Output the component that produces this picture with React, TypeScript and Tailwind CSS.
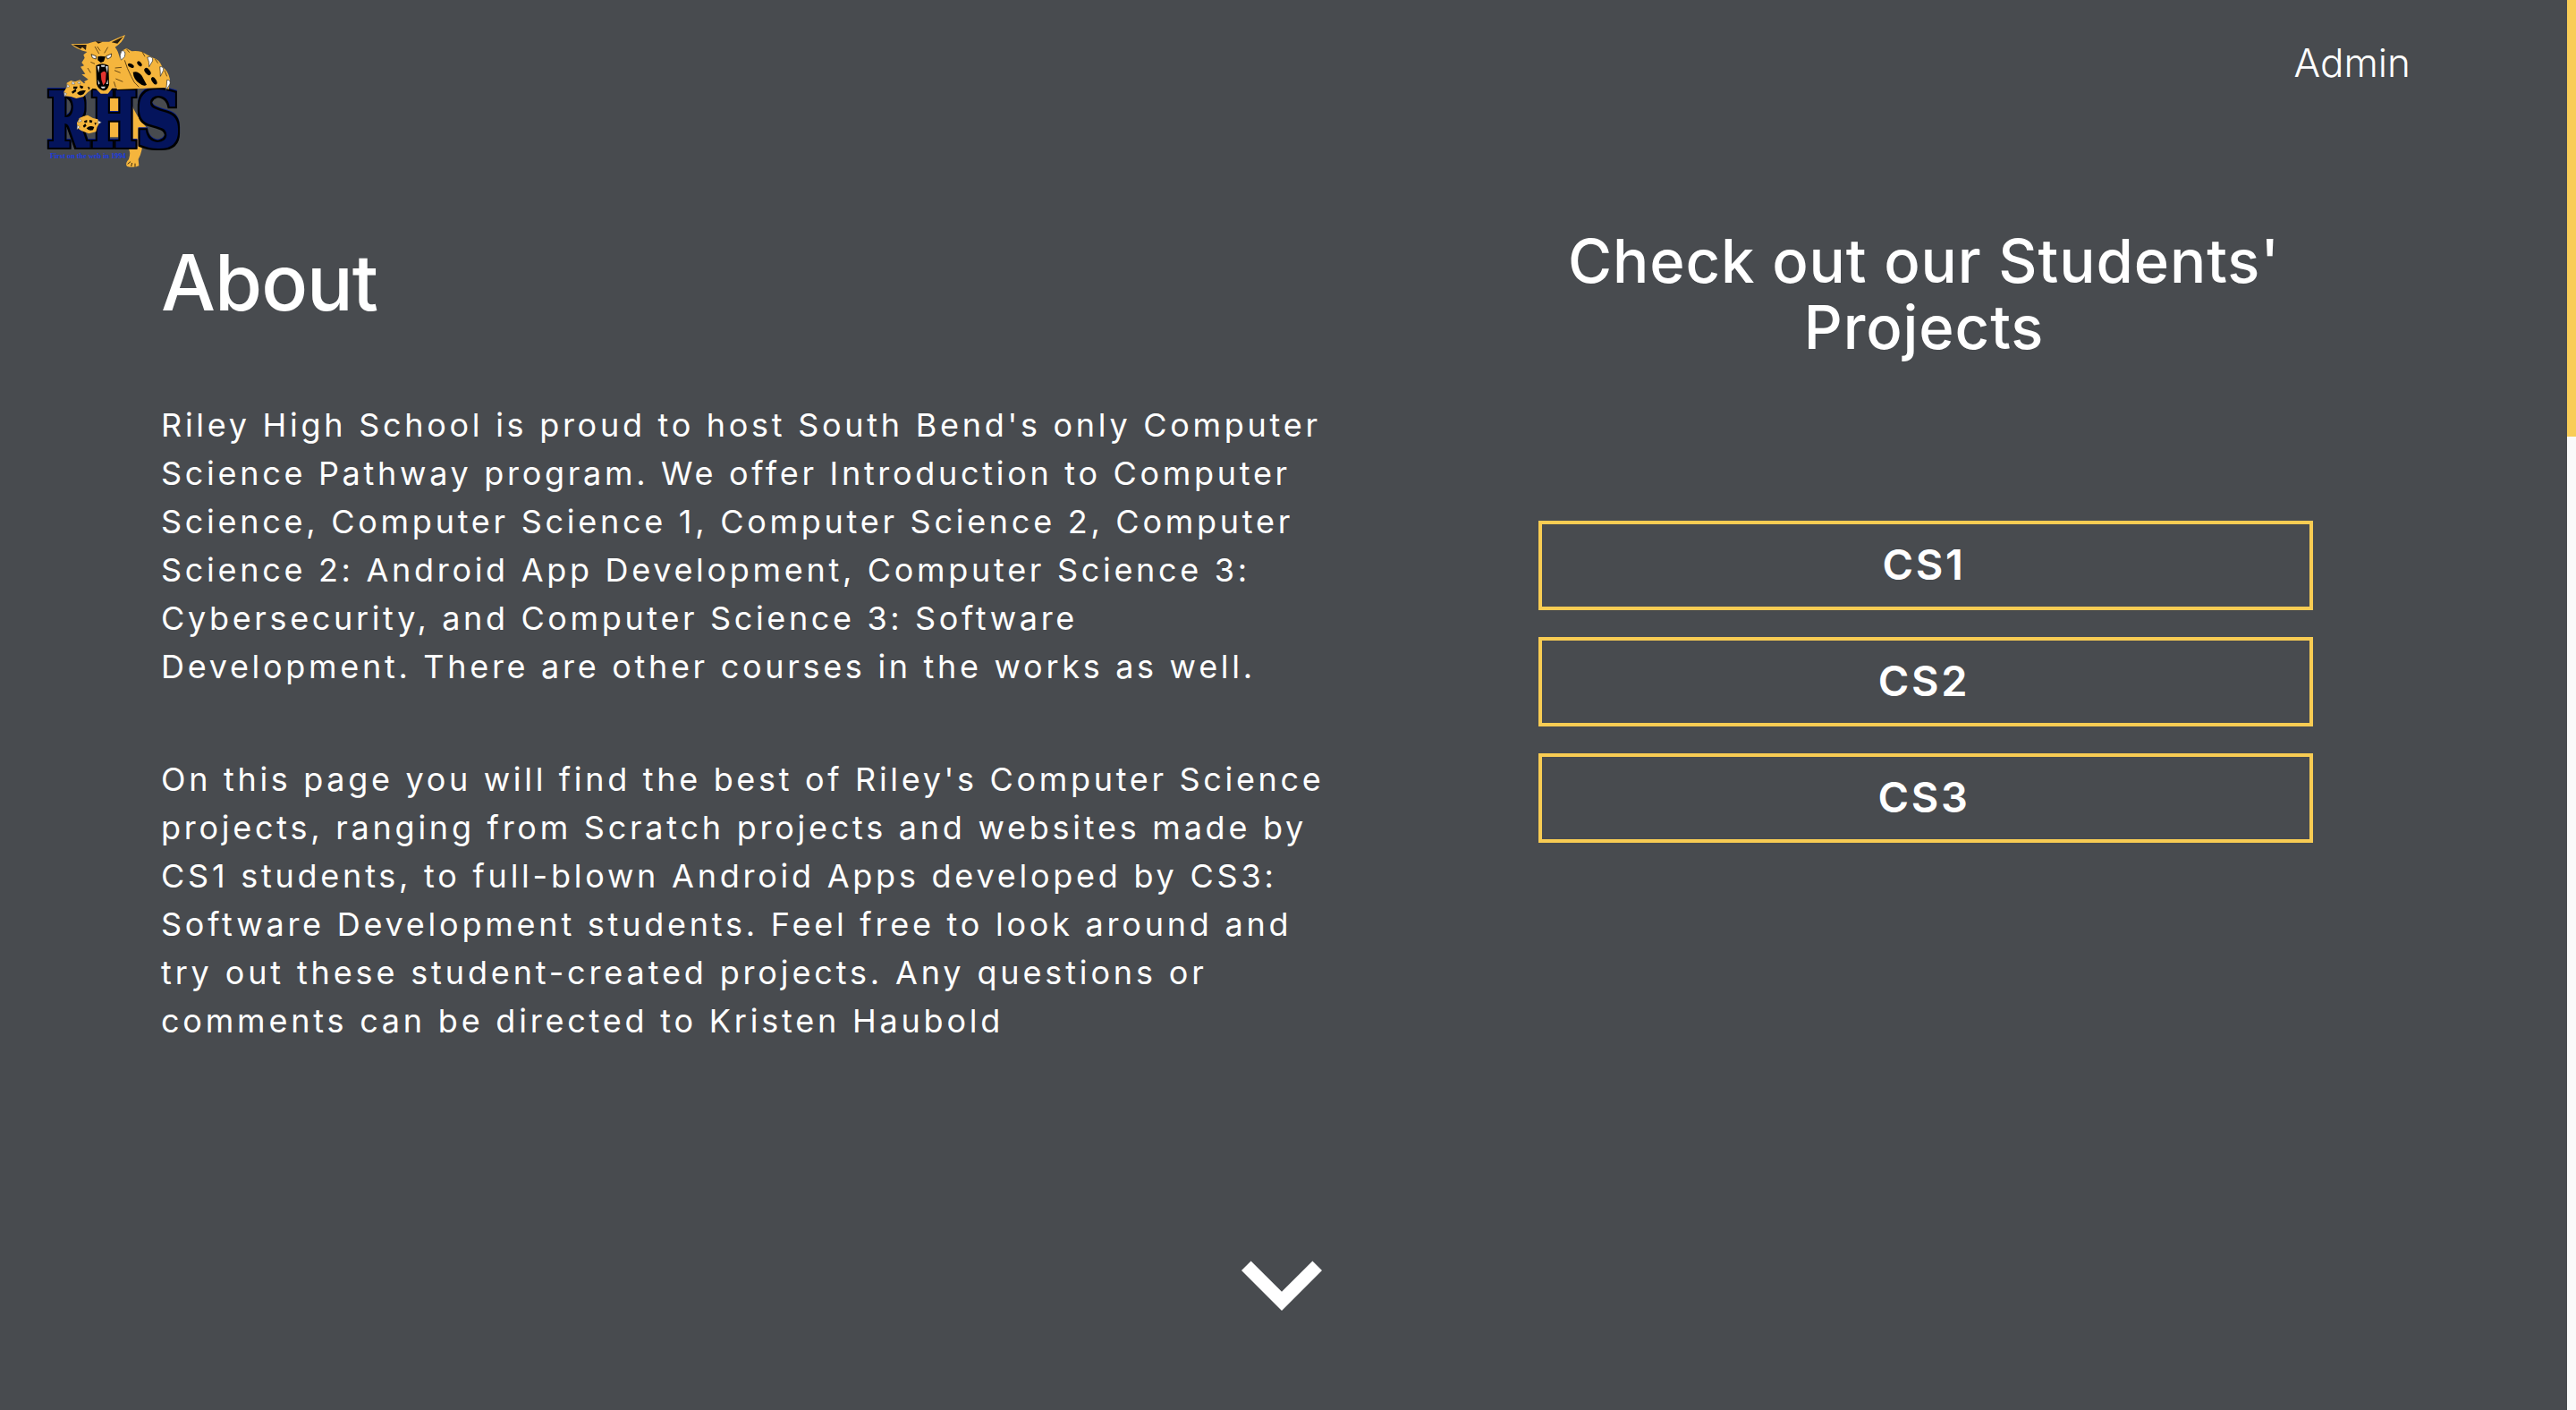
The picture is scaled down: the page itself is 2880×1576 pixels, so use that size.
import React from "react";

const LETTERS = [
  { char: "R", x: 70, width: 138 },
  { char: "H", x: 217, width: 152 },
  { char: "S", x: 367, width: 150 },
];

function Logo() {
  return (
    <svg viewBox="0 0 570 570" className="size-[190px]" role="img" aria-label="RHS Wildcats">
      <defs>
        <filter id="varsity" x="-15%" y="-15%" width="130%" height="130%" colorInterpolationFilters="sRGB">
          <feMorphology in="SourceAlpha" operator="dilate" radius="9" result="outer" />
          <feOffset in="outer" dx="1" dy="-3" result="shifted" />
          <feFlood floodColor="#08208f" />
          <feComposite in2="shifted" operator="in" result="bevel" />
          <feMorphology in="SourceAlpha" operator="dilate" radius="9" result="outline" />
          <feMorphology in="SourceGraphic" operator="dilate" radius="3" result="face" />
          <feMerge>
            <feMergeNode in="bevel" />
            <feMergeNode in="outline" />
            <feMergeNode in="face" />
          </feMerge>
        </filter>
      </defs>

      {/* body and hind leg behind the letters */}
      <path d="M276 240 L310 240 L310 400 L278 400 Z" className="fill-[#f5b53d]" />
      <path d="M352 290 Q362 322 402 368 L384 384 L386 440 Q382 460 374 474 L376 496 Q358 504 336 498 Q328 488 342 474 Q350 448 340 438 L344 380 Z" className="fill-[#f5b53d]" />
      <path d="M338 490 l10 -8 M350 498 l3 -12 M363 500 l0 -12" className="fill-none stroke-[#3a2b12]" strokeWidth="3" />

      {LETTERS.map((l) => (
        <text
          key={l.char}
          x={l.x}
          y={432}
          textLength={l.width}
          lengthAdjust="spacingAndGlyphs"
          filter="url(#varsity)"
          className="fill-[#04145c] font-['DejaVu_Serif'] text-[250px] font-bold"
        >
          {l.char}
        </text>
      ))}

      {/* raised arm and paw */}
      <path d="M302 240 Q304 150 316 112 L334 102 L352 112 Q382 108 404 124 L424 134 Q444 138 454 164 Q474 176 480 206 L476 240 L462 234 Z" className="fill-[#f5b53d]" />
      <path d="M356 182 Q372 176 386 194 L402 224 Q392 232 376 218 Q358 206 356 182 Z" className="fill-black" />
      <g className="fill-black">
        <ellipse cx="349" cy="160" rx="11" ry="6" transform="rotate(30 349 160)" />
        <ellipse cx="378" cy="154" rx="10" ry="6" transform="rotate(50 378 154)" />
        <ellipse cx="405" cy="180" rx="14" ry="8" transform="rotate(50 405 180)" />
        <ellipse cx="427" cy="211" rx="14" ry="7" transform="rotate(58 427 211)" />
      </g>
      <g className="fill-white stroke-[#222222]" strokeWidth="2">
        <path d="M318 110 Q334 108 328 130 L316 142 Q308 126 318 110 Z" />
        <path d="M404 132 Q424 126 422 144 L410 164 Q412 148 404 132 Z" />
        <path d="M446 164 Q460 162 458 176 L448 196 Q448 178 446 164 Z" />
        <path d="M470 208 Q484 208 480 222 L466 244 Q470 226 470 208 Z" />
      </g>
      <path d="M328 142 Q336 170 350 196 Q358 218 376 232 M334 104 L344 116 M386 112 L396 130 M430 138 L440 152 M462 176 L470 196" className="fill-none stroke-[#6b4a14]" strokeWidth="3" />

      {/* head */}
      <path
        d="M148 88 L204 86 Q218 82 234 78 L252 80 L276 80 L308 66 L330 57 Q322 82 296 98 Q308 112 312 138 L322 150 L312 158 L324 168 L314 176 L328 190 L312 196 L344 214 L364 236 L286 236 L272 254 L248 254 L232 238 L216 236 L192 214 L206 206 L184 190 L196 188 L180 164 L192 160 L184 150 L194 134 L190 124 L202 114 Q166 106 148 88 Z"
        className="fill-[#f5b53d]"
      />
      <path d="M154 90 L200 90 L198 108 L186 98 L180 104 Z M284 82 L324 62 L304 86 Z M230 78 L254 80 L240 86 Z" className="fill-[#2a1f10]" />
      <path d="M228 96 L242 120 M272 98 L260 118 M236 96 L246 110 M214 148 L228 154 M294 176 L314 184 M296 168 L318 166 M298 204 L322 214 M204 168 L214 184 M292 214 L298 232" className="fill-none stroke-[#6b4a14]" strokeWidth="3" />
      <path d="M216 122 L232 128 L232 138 L220 134 Z M266 128 L284 120 L282 132 L270 138 Z" className="fill-white stroke-black" strokeWidth="2" />
      <path d="M238 130 L248 128 L264 130 L258 146 L248 150 L238 142 Z" className="fill-black" />
      <path d="M232 160 Q252 148 274 160 L276 224 Q270 244 256 244 Q240 240 234 222 Z" className="fill-black" />
      <path d="M248 186 Q262 172 266 186 L264 216 L256 226 Q248 208 248 186 Z" className="fill-[#e3342f]" />
      <path d="M236 162 L244 162 L241 184 Z M264 162 L272 162 L270 186 Z M238 206 L245 220 L240 224 Z M272 206 L266 222 L272 222 Z M248 230 L264 230 L260 236 L252 236 Z M249 158 L262 158 L261 164 L250 164 Z" className="fill-[#d9dde0]" />

      {/* paw hooked over the R */}
      <path d="M126 262 L124 248 L134 232 L134 218 L148 210 L162 214 L178 208 L192 220 L202 214 L216 222 L220 238 L204 250 L190 264 L166 270 L148 264 Z" className="fill-[#f5b53d]" />
      <path d="M168 252 Q180 240 198 244 L190 256 Q176 264 168 252 Z M150 248 l14 -10 l2 8 l-12 8 Z M156 230 l14 0 l-2 8 l-12 0 Z M178 226 l12 4 l-4 8 l-8 -4 Z M204 230 l8 4 l-4 8 Z" className="fill-black" />
      <path d="M126 264 L126 250 L134 254 Z M134 234 L136 222 L144 230 Z M150 222 L154 212 L162 222 Z M170 218 L176 212 L180 222 Z" className="fill-[#eef0f2] stroke-[#555555]" strokeWidth="1.5" />

      {/* paw between the R and the H */}
      <path d="M170 370 L168 352 L176 336 L190 330 L204 326 L222 336 L238 340 L244 352 L236 366 L232 382 L208 388 L182 378 Z" className="fill-[#f5b53d]" />
      <path d="M200 370 Q212 358 226 366 L222 376 Q206 380 200 370 Z M188 362 l8 -8 l4 8 l-8 6 Z M192 346 l10 -4 l0 8 l-8 2 Z M210 342 l10 2 l-2 8 l-8 -2 Z M226 352 l8 0 l-4 8 Z" className="fill-black" />
      <path d="M168 374 L170 360 L178 366 Z M172 350 L178 338 L184 346 Z M238 344 L250 350 L240 356 Z" className="fill-[#eef0f2] stroke-[#555555]" strokeWidth="1.5" />

      <text x="78" y="471" textLength="254" lengthAdjust="spacingAndGlyphs" className="fill-[#1c3be0] font-['Liberation_Serif'] text-[26px] font-bold">
        First on the web in 1994
      </text>
    </svg>
  );
}

const INTRO = [
  { text: "Riley High School is proud to host South Bend's only Computer", tracking: "tracking-[3.72px]" },
  { text: "Science Pathway program. We offer Introduction to Computer", tracking: "tracking-[3.7px]" },
  { text: "Science, Computer Science 1, Computer Science 2, Computer", tracking: "tracking-[3.73px]" },
  { text: "Science 2: Android App Development, Computer Science 3:", tracking: "tracking-[3.7px]" },
  { text: "Cybersecurity, and Computer Science 3: Software", tracking: "tracking-[3.64px]" },
  { text: "Development. There are other courses in the works as well.", tracking: "tracking-[3.7px]" },
];

const DETAILS = [
  { text: "On this page you will find the best of Riley's Computer Science", tracking: "tracking-[3.68px]" },
  { text: "projects, ranging from Scratch projects and websites made by", tracking: "tracking-[3.75px]" },
  { text: "CS1 students, to full-blown Android Apps developed by CS3:", tracking: "tracking-[3.76px]" },
  { text: "Software Development students. Feel free to look around and", tracking: "tracking-[3.77px]" },
  { text: "try out these student-created projects. Any questions or", tracking: "tracking-[3.86px]" },
  { text: "comments can be directed to Kristen Haubold", tracking: "tracking-[3.79px]" },
];

function Paragraph({ lines }: { lines: { text: string; tracking: string }[] }) {
  return (
    <p className="whitespace-nowrap text-[36px] leading-[54px]">
      {lines.map((line) => (
        <span key={line.text} className={`block ${line.tracking}`}>{line.text}</span>
      ))}
    </p>
  );
}

export default function App() {
  return (
    <div className="flex h-[1576px] w-[2880px] overflow-hidden bg-[#484b4f] font-['Inter',sans-serif] text-white">
      <div className="flex w-[2870px] flex-col">
        <header className="flex h-[255px] items-start justify-between pl-[30px] pr-[175px]">
          <div className="pt-5">
            <Logo />
          </div>
          <a className="pt-10 text-[44px] font-light leading-[60px]">Admin</a>
        </header>

        <main className="flex h-[1090px] items-start pl-[180px]">
          <section className="w-[1540px] pt-[13px]">
            <h1 className="mb-[84px] text-[86px] font-[450] leading-[96px] tracking-[-1px]">About</h1>
            <div className="flex flex-col gap-[72px]">
              <Paragraph lines={INTRO} />
              <Paragraph lines={DETAILS} />
            </div>
          </section>

          <section className="w-[866px]">
            <h2 className="mb-[179px] pr-1 text-center text-[67px] font-medium leading-[74px] tracking-[0.9px]">
              Check out our Students'
              <br />
              Projects
            </h2>
            <div className="flex flex-col gap-[30px]">
              {["CS1", "CS2", "CS3"].map((course) => (
                <button
                  key={course}
                  className="flex h-[100px] items-center justify-center border-4 border-[#f8cc53] pb-[3px] pr-1 text-[47px] font-semibold leading-none tracking-[2.7px]"
                >
                  {course}
                </button>
              ))}
            </div>
          </section>
        </main>

        <div className="flex h-[180px] justify-center pr-1">
          <svg viewBox="0 0 24 24" className="size-[180px] fill-white">
            <path d="M16.59 8.59 12 13.17 7.41 8.59 6 10l6 6 6-6z" />
          </svg>
        </div>
      </div>

      <div className="w-[10px] bg-[#fafafa]">
        <div className="h-[488px] bg-[#f9cd57]" />
      </div>
    </div>
  );
}
